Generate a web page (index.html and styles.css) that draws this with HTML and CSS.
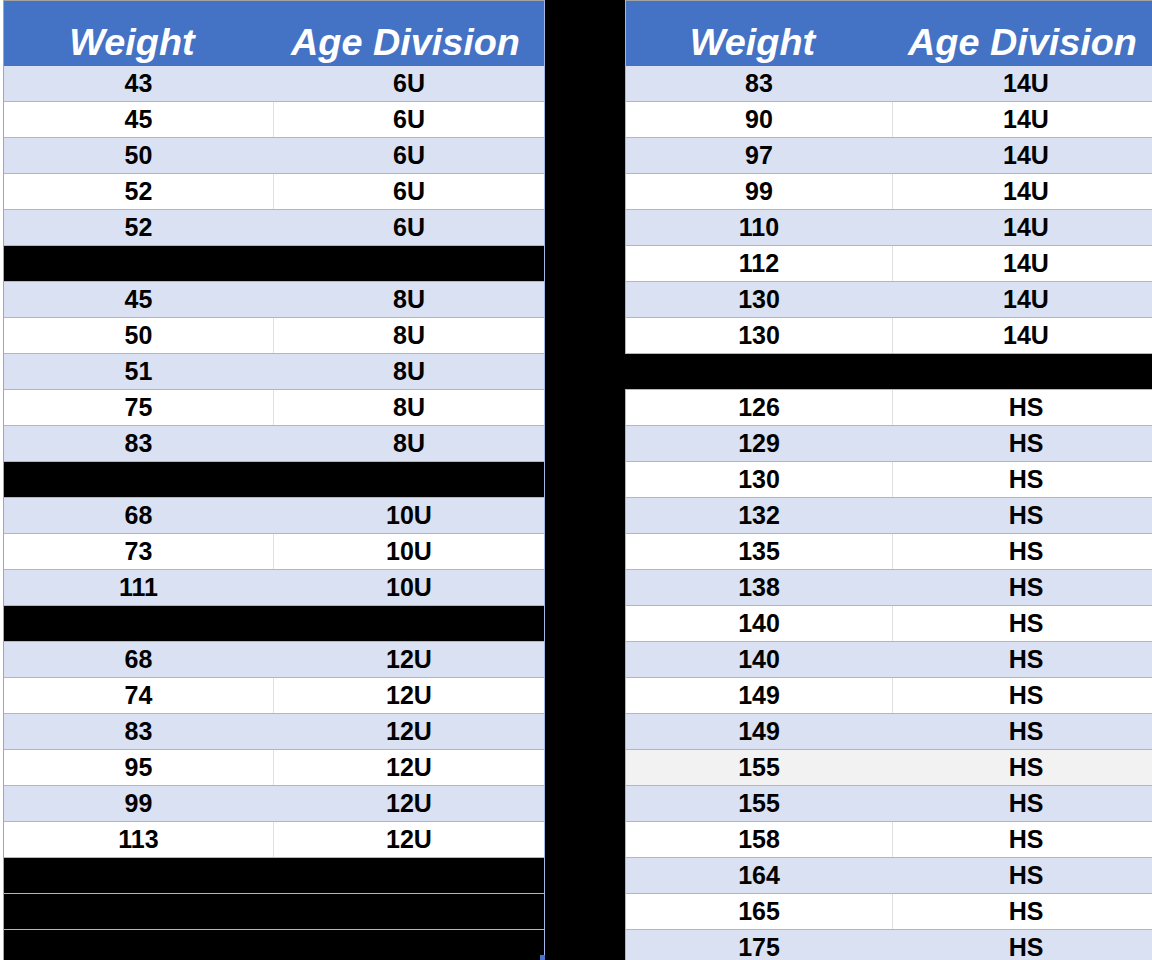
FILE: index.html
```html
<!DOCTYPE html>
<html>
<head>
<meta charset="utf-8">
<link rel="stylesheet" href="styles.css">
</head>
<body>
<div class="sheet">
  <div class="table left">
    <div class="head"><div class="c c1">Weight</div><div class="c c2">Age Division</div></div>
    <div class="row b"><div class="c c1">43</div><div class="c c2">6U</div></div>
    <div class="row w"><div class="c c1">45</div><div class="c c2">6U</div></div>
    <div class="row b"><div class="c c1">50</div><div class="c c2">6U</div></div>
    <div class="row w"><div class="c c1">52</div><div class="c c2">6U</div></div>
    <div class="row b"><div class="c c1">52</div><div class="c c2">6U</div></div>
    <div class="row k"><div class="c c1"></div><div class="c c2"></div></div>
    <div class="row b"><div class="c c1">45</div><div class="c c2">8U</div></div>
    <div class="row w"><div class="c c1">50</div><div class="c c2">8U</div></div>
    <div class="row b"><div class="c c1">51</div><div class="c c2">8U</div></div>
    <div class="row w"><div class="c c1">75</div><div class="c c2">8U</div></div>
    <div class="row b"><div class="c c1">83</div><div class="c c2">8U</div></div>
    <div class="row k"><div class="c c1"></div><div class="c c2"></div></div>
    <div class="row b"><div class="c c1">68</div><div class="c c2">10U</div></div>
    <div class="row w"><div class="c c1">73</div><div class="c c2">10U</div></div>
    <div class="row b"><div class="c c1">111</div><div class="c c2">10U</div></div>
    <div class="row k"><div class="c c1"></div><div class="c c2"></div></div>
    <div class="row b"><div class="c c1">68</div><div class="c c2">12U</div></div>
    <div class="row w"><div class="c c1">74</div><div class="c c2">12U</div></div>
    <div class="row b"><div class="c c1">83</div><div class="c c2">12U</div></div>
    <div class="row w"><div class="c c1">95</div><div class="c c2">12U</div></div>
    <div class="row b"><div class="c c1">99</div><div class="c c2">12U</div></div>
    <div class="row w"><div class="c c1">113</div><div class="c c2">12U</div></div>
    <div class="row k"><div class="c c1"></div><div class="c c2"></div></div>
    <div class="row k"><div class="c c1"></div><div class="c c2"></div></div>
    <div class="row k last"><div class="c c1"></div><div class="c c2"></div><span class="handle"></span></div>
  </div>
  <div class="gap"></div>
  <div class="table right">
    <div class="head"><div class="c c1">Weight</div><div class="c c2">Age Division</div></div>
    <div class="row b"><div class="c c1">83</div><div class="c c2">14U</div></div>
    <div class="row w"><div class="c c1">90</div><div class="c c2">14U</div></div>
    <div class="row b"><div class="c c1">97</div><div class="c c2">14U</div></div>
    <div class="row w"><div class="c c1">99</div><div class="c c2">14U</div></div>
    <div class="row b"><div class="c c1">110</div><div class="c c2">14U</div></div>
    <div class="row w"><div class="c c1">112</div><div class="c c2">14U</div></div>
    <div class="row b"><div class="c c1">130</div><div class="c c2">14U</div></div>
    <div class="row w"><div class="c c1">130</div><div class="c c2">14U</div></div>
    <div class="row k"><div class="c c1"></div><div class="c c2"></div></div>
    <div class="row w"><div class="c c1">126</div><div class="c c2">HS</div></div>
    <div class="row b"><div class="c c1">129</div><div class="c c2">HS</div></div>
    <div class="row w"><div class="c c1">130</div><div class="c c2">HS</div></div>
    <div class="row b"><div class="c c1">132</div><div class="c c2">HS</div></div>
    <div class="row w"><div class="c c1">135</div><div class="c c2">HS</div></div>
    <div class="row b"><div class="c c1">138</div><div class="c c2">HS</div></div>
    <div class="row w"><div class="c c1">140</div><div class="c c2">HS</div></div>
    <div class="row b"><div class="c c1">140</div><div class="c c2">HS</div></div>
    <div class="row w"><div class="c c1">149</div><div class="c c2">HS</div></div>
    <div class="row b"><div class="c c1">149</div><div class="c c2">HS</div></div>
    <div class="row g"><div class="c c1">155</div><div class="c c2">HS</div></div>
    <div class="row b"><div class="c c1">155</div><div class="c c2">HS</div></div>
    <div class="row w"><div class="c c1">158</div><div class="c c2">HS</div></div>
    <div class="row b"><div class="c c1">164</div><div class="c c2">HS</div></div>
    <div class="row w"><div class="c c1">165</div><div class="c c2">HS</div></div>
    <div class="row b"><div class="c c1">175</div><div class="c c2">HS</div></div>
  </div>
</div>
</body>
</html>
```

FILE: styles.css
```css
html, body {
  margin: 0;
  padding: 0;
  background: #ffffff;
  overflow: hidden;
}

.sheet {
  display: flex;
  align-items: flex-start;
  width: 1152px;
  height: 960px;
  overflow: hidden;
  padding-left: 3px;
  box-sizing: border-box;
  background: #ffffff;
  font-family: "Liberation Sans", Arial, sans-serif;
  color: #000000;
}

.table {
  display: flex;
  flex-direction: column;
  flex-shrink: 0;
  border-top: 1px solid #a3a3a3;
}

.left {
  border-left: 1px solid #a6a6a6;
  border-right: 1px solid #9fb8e6;
}

.right {
  border-left: 1px solid #9fb8e6;
}

.gap {
  flex: 0 0 80px;
  height: 960px;
  background: #000000;
}

.head {
  display: flex;
  height: 65px;
  background: #4472c4;
}

.head .c {
  display: flex;
  align-items: flex-end;
  justify-content: center;
  padding-bottom: 5px;
  padding-right: 13px;
  box-sizing: border-box;
  color: #ffffff;
  font-size: 37.8px;
  line-height: 37px;
  font-weight: bold;
  font-style: italic;
  border-right: 1px solid #4472c4;
}

.head .c2 {
  border-right: none;
  padding-right: 7px;
}

.row {
  position: relative;
  display: flex;
  height: 36px;
  box-sizing: border-box;
  border-bottom: 1px solid #9fb8e6;
}

.row .c {
  display: flex;
  align-items: center;
  justify-content: center;
  height: 35px;
  box-sizing: border-box;
  font-size: 25px;
  line-height: 35px;
  font-weight: bold;
}

.row .c1 {
  border-right: 1px solid transparent;
}

.left .c1 { width: 270px; }
.left .c2 { width: 270px; }
.right .c1 { width: 267px; }
.right .c2 { width: 266px; }

.row.b { background: #d9e1f2; }
.row.b .c1 { border-right-color: #d9e1f2; }

.row.w { background: #ffffff; }
.row.w .c1 { border-right-color: #e0e0e0; }

.row.g { background: #f2f2f2; }
.row.g .c1 { border-right-color: #f2f2f2; }

.row.k { background: #000000; }
.row.k .c1 { border-right-color: #000000; }

.right .row.k {
  margin-left: -1px;
  padding-left: 1px;
}

.handle {
  position: absolute;
  right: -1px;
  bottom: 5px;
  width: 5px;
  height: 5px;
  background: #4a72d0;
}
```
